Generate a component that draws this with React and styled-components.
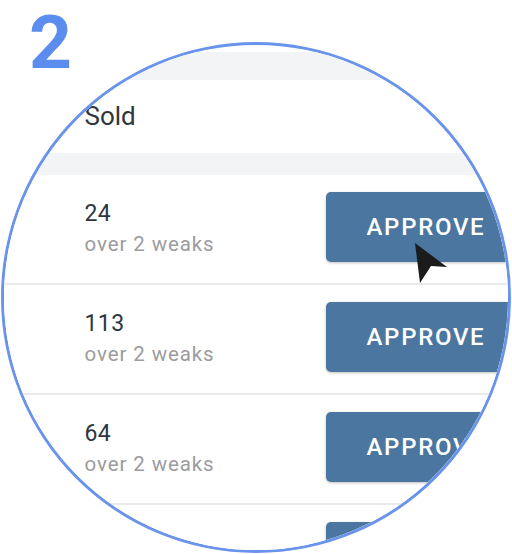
import React from 'react';
import styled, { createGlobalStyle } from 'styled-components';

const Global = createGlobalStyle`
  html, body {
    margin: 0;
    padding: 0;
    background: #ffffff;
    font-family: Roboto, "Liberation Sans", Arial, sans-serif;
  }
`;

const Stage = styled.div`
  position: relative;
  width: 512px;
  height: 554px;
  overflow: hidden;
  background: #fff;
`;

const StepNumber = styled.div`
  position: absolute;
  left: 29px;
  top: 4px;
  font-size: 75px;
  line-height: 76px;
  font-weight: 700;
  color: #5b8def;
  z-index: 2;
`;

const Lens = styled.div`
  box-sizing: border-box;
  margin: 42px 0 0 1px;
  width: 510px;
  height: 511px;
  border: 3.5px solid #6a94ec;
  border-radius: 50%;
  overflow: hidden;
  position: relative;
`;

const Table = styled.div`
  width: 640px;
  padding-top: 6.5px;
  display: flex;
  flex-direction: column;
`;

const Band = styled.div`
  height: ${({ h }) => h}px;
  background: #f3f4f6;
`;

const HeadRow = styled.div`
  height: 73px;
  display: flex;
  align-items: center;
  padding-left: 80.5px;
  font-size: 26px;
  color: #2f363d;
  background: #fff;
`;

const Row = styled.div`
  height: 108px;
  display: grid;
  grid-template-columns: 241px 220px;
  align-items: center;
  padding-left: 80.5px;
  background: #fff;
  border-bottom: 2px solid #e9eaec;
`;

const Cell = styled.div`
  display: flex;
  flex-direction: column;
  margin-top: 1px;
`;

const Count = styled.span`
  font-size: 23px;
  line-height: 30px;
  color: #2d3640;
  letter-spacing: 0.4px;
`;

const Period = styled.span`
  font-size: 20.5px;
  line-height: 30px;
  color: #9b9c9e;
  letter-spacing: 0.9px;
`;

const Approve = styled.button`
  width: 220px;
  height: 70px;
  margin-top: -3px;
  border: none;
  border-radius: 5px;
  background: #4a76a0;
  color: #fff;
  font-family: Roboto, "Liberation Sans", Arial, sans-serif;
  font-size: 24px;
  font-weight: 500;
  letter-spacing: 1.7px;
  text-align: left;
  padding: 0 0 0 41px;
  box-shadow: 0 1px 3px rgba(0, 0, 0, 0.25);
`;

const Cursor = styled.svg`
  position: absolute;
  left: 412px;
  top: 240px;
  z-index: 3;
`;

const rows = [
  { count: '24' },
  { count: '113' },
  { count: '64' },
  { count: '' },
];

export default function App() {
  return (
    <Stage>
      <Global />
      <StepNumber>2</StepNumber>
      <Lens>
        <Table>
          <Band h={28} />
          <HeadRow>Sold</HeadRow>
          <Band h={22} />
          {rows.map((r, i) => (
            <Row key={i}>
              <Cell>
                <Count>{r.count}</Count>
                <Period>{r.count && 'over 2 weaks'}</Period>
              </Cell>
              <Approve>APPROVE</Approve>
            </Row>
          ))}
        </Table>
      </Lens>
      <Cursor width="40" height="46" viewBox="0 0 40 46">
        <path d="M3 3 L35 27 L19 26 L8 43 Z" fill="#1b1b1b" />
      </Cursor>
    </Stage>
  );
}
